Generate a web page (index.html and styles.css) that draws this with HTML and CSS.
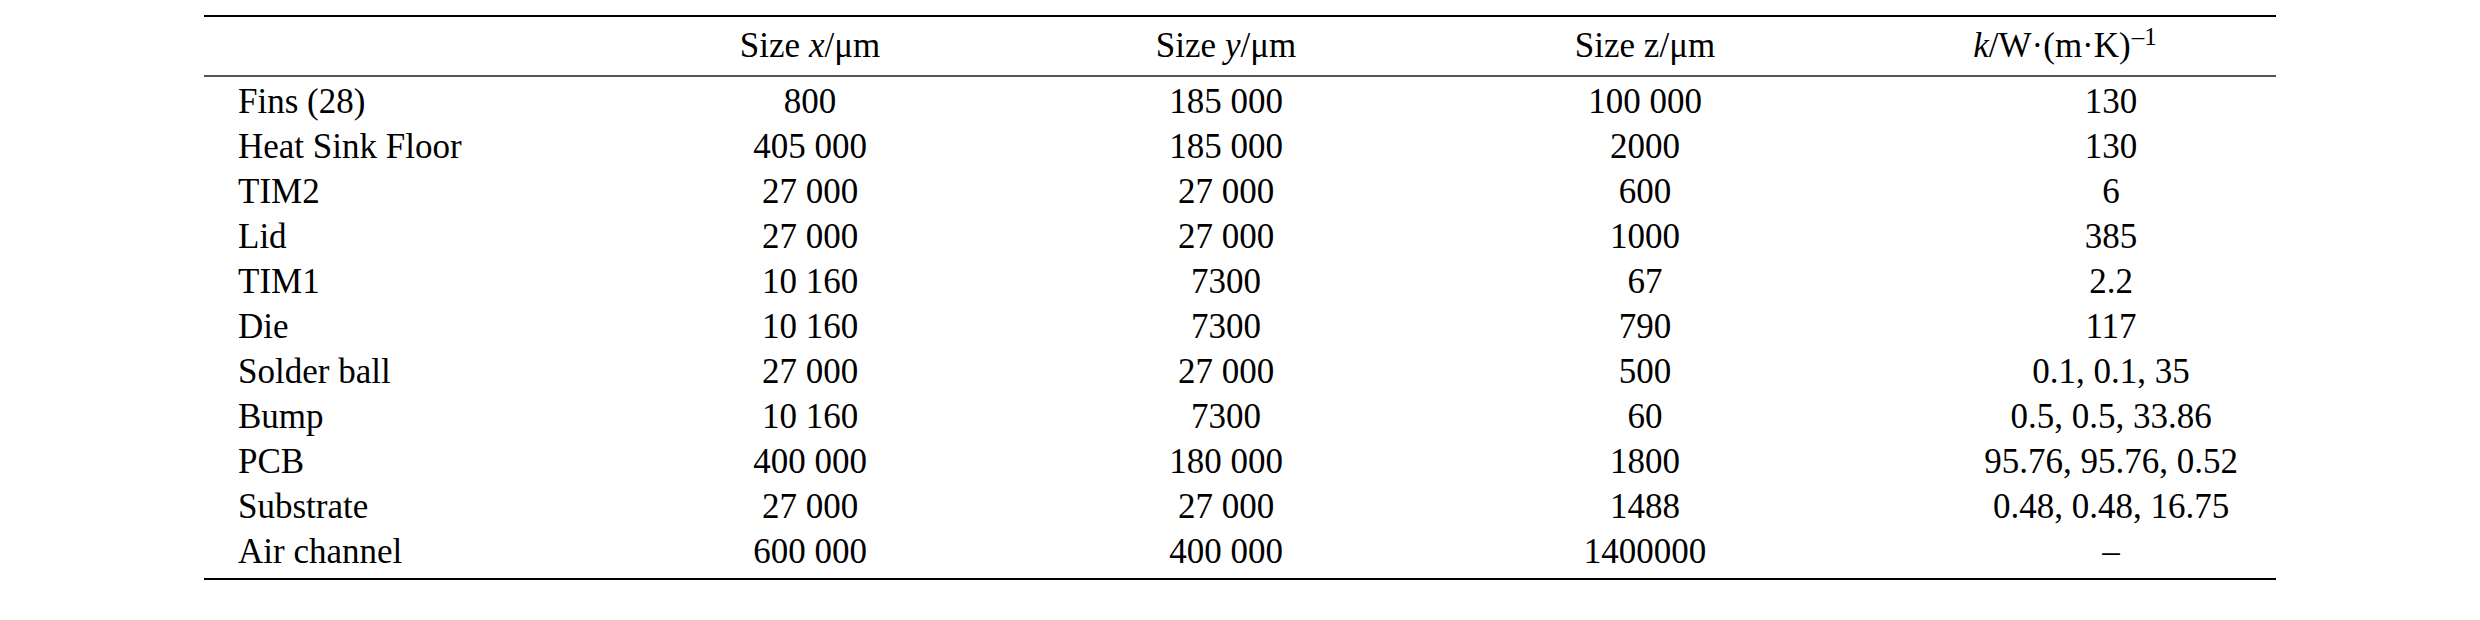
FILE: index.html
```html
<!DOCTYPE html>
<html>
<head>
<meta charset="utf-8">
<link rel="stylesheet" href="styles.css">
</head>
<body>
<div class="page">
<table class="tbl">
  <colgroup>
    <col class="c0"><col class="c1"><col class="c2"><col class="c3"><col class="c4">
  </colgroup>
  <thead>
    <tr>
      <th class="label"></th>
      <th>Size <i>x</i>/μm</th>
      <th>Size <i>y</i>/μm</th>
      <th>Size z/μm</th>
      <th class="khead"><i>k</i>/W·(m·K)<sup>–1</sup></th>
    </tr>
  </thead>
  <tbody>
    <tr class="first"><td class="label">Fins (28)</td><td>800</td><td>185 000</td><td>100 000</td><td class="k">130</td></tr>
    <tr><td class="label">Heat Sink Floor</td><td>405 000</td><td>185 000</td><td>2000</td><td class="k">130</td></tr>
    <tr><td class="label">TIM2</td><td>27 000</td><td>27 000</td><td>600</td><td class="k">6</td></tr>
    <tr><td class="label">Lid</td><td>27 000</td><td>27 000</td><td>1000</td><td class="k">385</td></tr>
    <tr><td class="label">TIM1</td><td>10 160</td><td>7300</td><td>67</td><td class="k">2.2</td></tr>
    <tr><td class="label">Die</td><td>10 160</td><td>7300</td><td>790</td><td class="k">117</td></tr>
    <tr><td class="label">Solder ball</td><td>27 000</td><td>27 000</td><td>500</td><td class="k">0.1, 0.1, 35</td></tr>
    <tr><td class="label">Bump</td><td>10 160</td><td>7300</td><td>60</td><td class="k">0.5, 0.5, 33.86</td></tr>
    <tr><td class="label">PCB</td><td>400 000</td><td>180 000</td><td>1800</td><td class="k">95.76, 95.76, 0.52</td></tr>
    <tr><td class="label">Substrate</td><td>27 000</td><td>27 000</td><td>1488</td><td class="k">0.48, 0.48, 16.75</td></tr>
    <tr class="last"><td class="label">Air channel</td><td>600 000</td><td>400 000</td><td>1400000</td><td class="k">–</td></tr>
  </tbody>
</table>
</div>
</body>
</html>
```

FILE: styles.css
```css
html, body {
  margin: 0;
  padding: 0;
  background: #fff;
}
.page {
  padding: 15px 0 0 204px;
}
.tbl {
  width: 2072px;
  table-layout: fixed;
  border-collapse: separate;
  border-spacing: 0;
  font-family: "Liberation Serif", "Times New Roman", serif;
  font-size: 35px;
  line-height: 45px;
  color: #000;
}
.c0 { width: 400px; }
.c1 { width: 412px; }
.c2 { width: 420px; }
.c3 { width: 418px; }
.c4 { width: 422px; }
.tbl th, .tbl td {
  padding: 0;
  text-align: center;
  font-weight: normal;
  white-space: nowrap;
}
.tbl th {
  border-top: 2px solid #000;
  border-bottom: 2px solid #555;
  padding-top: 6px;
  padding-bottom: 7px;
}
.tbl .label {
  text-align: left;
  padding-left: 34px;
}
.tbl td.k {
  padding-left: 92px;
}
.tbl sup {
  font-size: 25px;
  line-height: 0;
  vertical-align: 12px;
  margin-left: 1px;
}
.tbl tr.first td {
  padding-top: 2px;
}
.tbl tr.last td {
  padding-bottom: 4px;
  border-bottom: 2px solid #000;
}
```
